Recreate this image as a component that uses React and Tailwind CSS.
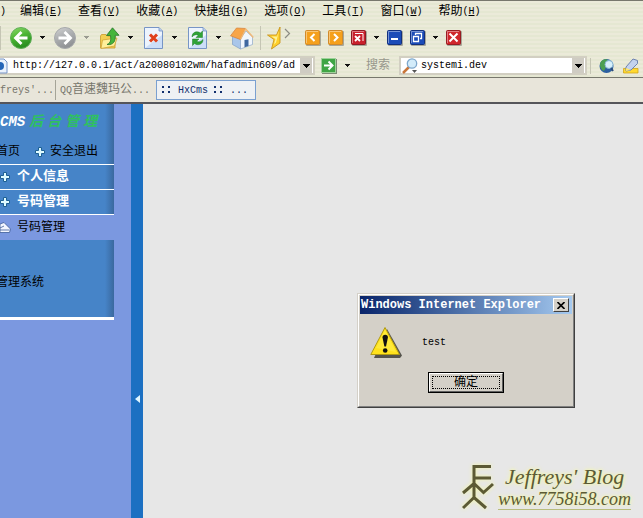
import React, { useState } from "react";

const MENUS = [
  { label: "编辑", hotkey: "E" },
  { label: "查看", hotkey: "V" },
  { label: "收藏", hotkey: "A" },
  { label: "快捷组", hotkey: "G" },
  { label: "选项", hotkey: "O" },
  { label: "工具", hotkey: "T" },
  { label: "窗口", hotkey: "W" },
  { label: "帮助", hotkey: "H" },
];

const DownArrow = ({ color = "#111", label }) => (
  <button aria-label={label} className="w-[6px] shrink-0">
    <svg viewBox="0 0 6 4" className="block h-1 w-[6px]" shapeRendering="crispEdges">
      <path d="M0 0h5v1H0zM1 1h3v1H1zM2 2h1v1H2z" fill={color} />
    </svg>
  </button>
);

const BackIcon = () => (
  <svg viewBox="0 0 22 22" className="block size-[22px]">
    <defs>
      <linearGradient id="back" x1="0" y1="0" x2="0.4" y2="1">
        <stop offset="0" stopColor="#8fdc6c" />
        <stop offset="0.5" stopColor="#4cb534" />
        <stop offset="1" stopColor="#2b8f20" />
      </linearGradient>
    </defs>
    <circle cx="11" cy="11" r="10.5" fill="url(#back)" stroke="#5fae57" />
    <path d="M17.500 11H6M11.500 5L5.500 11l6 6" fill="none" stroke="#fff" strokeWidth="2.800" />
  </svg>
);

const ForwardIcon = () => (
  <svg viewBox="0 0 22 22" className="block size-[22px]">
    <defs>
      <linearGradient id="fwd" x1="0" y1="0" x2="0.4" y2="1">
        <stop offset="0" stopColor="#d2d3d4" />
        <stop offset="0.5" stopColor="#adafb1" />
        <stop offset="1" stopColor="#909295" />
      </linearGradient>
    </defs>
    <circle cx="11" cy="11" r="10.5" fill="url(#fwd)" stroke="#a6a8ab" />
    <path d="M4.500 11H16M10.500 5l6 6-6 6" fill="none" stroke="#fff" strokeWidth="2.800" />
  </svg>
);

const FolderIcon = () => (
  <svg viewBox="0 0 22 22" className="block size-[22px]">
    <path d="M2.500 9l1-1.500h4.500l1.500 1.500H17v12H2.500z" fill="#f3cf52" stroke="#c99a2c" strokeWidth="0.8" />
    <path d="M4.500 13l14.500-2-2.500 8L3 21.500z" fill="#ffef9a" stroke="#d0a336" strokeWidth="0.8" />
    <path d="M9 17.500c4-1.500 4-5 3.500-9H8.500L14.500 .8l6.500 7.500h-3.800c.5 6-1.700 10-8.200 9.200z" fill="#45b53a" stroke="#24752a" strokeWidth="0.8" />
  </svg>
);

const PageIcon = ({ children }) => (
  <svg viewBox="0 0 22 22" className="block size-[22px]">
    <path d="M2.500 .5H17l3.500 3.500v17.500h-18z" fill="#edf4fd" stroke="#7795c6" />
    <path d="M17 .5V4h3.500" fill="#b9cdec" stroke="#7795c6" strokeWidth="0.8" />
    <path d="M3 21h17V8z" fill="#c3d8f6" opacity="0.8" />
    {children}
  </svg>
);

const HomeIcon = () => (
  <svg viewBox="0 0 24 24" className="block size-6">
    <path d="M2.500 10l8 2.500V23l-8-4.500z" fill="#a9c6ea" stroke="#7f9dc6" strokeWidth="0.7" />
    <path d="M10.500 23V12.500L16 5l6.500 6v7.500z" fill="#f1f6fd" stroke="#8ea8c9" strokeWidth="0.7" />
    <path d="M.5 9.800L6.500 2l9 .5-5.200 11z" fill="#f7a548" stroke="#d5803a" strokeWidth="0.7" />
    <path d="M10.600 13.200L15.700 3l7.600 8.500" fill="none" stroke="#f0b878" strokeWidth="1.400" />
    <path d="M14.500 14l4-.8v6.800l-4 1.300z" fill="#3f679f" />
  </svg>
);

const StarIcon = () => (
  <svg viewBox="0 0 24 24" className="block size-6">
    <path d="M13 1l-3.500 8H.5l6.500 4.500L4.500 23l8.500-6z" fill="#ffd02a" stroke="#c99620" strokeWidth="0.9" />
    <path d="M12 5l-2 5.500H4.500L8.500 13l-1.500 5.500 2-2z" fill="#fff29a" />
    <path d="M18 3l4.500 4.500L18 12" fill="none" stroke="#8c8c84" strokeWidth="1.200" />
  </svg>
);

const SquareButton = ({ label, fill, edge, children }) => (
  <button aria-label={label} className="size-4 shrink-0">
    <svg viewBox="0 0 16 16" className="block size-4">
      <rect x="1" y="1" width="15" height="15" rx="1" fill="#8b8b80" opacity="0.7" />
      <rect x="0.5" y="0.5" width="14" height="14" rx="1" fill={fill} stroke={edge} />
      <path d="M1.500 13V1.500H13" fill="none" stroke="#fff" opacity="0.4" />
      {children}
    </svg>
  </button>
);

const PlusIcon = () => (
  <svg viewBox="0 0 10 10" className="block size-[10px] shrink-0">
    <path d="M3.500 .5h3v3h3v3h-3v3h-3v-3h-3v-3h3z" fill="#dffbff" stroke="#1c5f94" />
  </svg>
);

const MenuBar = () => (
  <nav className="flex h-[21px] items-center gap-4 whitespace-nowrap">
    <span className="w-1 text-[10px]">)</span>
    {MENUS.map((menu) => (
      <button key={menu.hotkey} className="flex items-center">
        <span className="text-xs">{menu.label}</span>
        <span className="text-[10px]">
          (<span className="underline">{menu.hotkey}</span>)
        </span>
      </button>
    ))}
  </nav>
);

const ToolBar = () => (
  <div className="flex h-8 items-center">
    <div className="flex items-center gap-2 border-l border-[#c5c5b4] pl-[9px]">
      <button aria-label="后退"><BackIcon /></button>
      <DownArrow label="后退列表" />
      <button aria-label="前进"><ForwardIcon /></button>
      <DownArrow label="前进列表" color="#9a9a90" />
      <button aria-label="打开"><FolderIcon /></button>
      <DownArrow label="打开列表" />
      <button aria-label="停止">
        <PageIcon>
          <path d="M8 7.500l7 7M15 7.500l-7 7" stroke="#e0401c" strokeWidth="3" />
        </PageIcon>
      </button>
      <DownArrow label="停止列表" />
      <button aria-label="刷新">
        <PageIcon>
          <path d="M6 10c0-5 5-6.500 8.500-4L16.500 4v6.500H10l2.300-2.300C10 7 8 7.800 6 10z" fill="#2fa336" stroke="#1d7a2a" strokeWidth="0.5" />
          <path d="M17 12.500c0 5-5 6.500-8.500 4L6.500 18.500V12H13l-2.300 2.300c2.300 1.200 4.300.4 6.300-1.800z" fill="#2fa336" stroke="#1d7a2a" strokeWidth="0.5" />
        </PageIcon>
      </button>
      <DownArrow label="刷新列表" />
      <button aria-label="主页"><HomeIcon /></button>
    </div>
    <button aria-label="收藏夹" className="ml-[6px] border-l border-[#c5c5b4] pl-[6px]"><StarIcon /></button>

    {/* page / window buttons */}
    <div className="ml-[14px] flex items-center gap-[7px]">
      <SquareButton label="上一页" fill="#f5a01c" edge="#d08a2c">
        <path d="M9.500 4L6 7.500 9.500 11" fill="none" stroke="#fff" strokeWidth="2" />
      </SquareButton>
      <SquareButton label="下一页" fill="#f5a01c" edge="#d08a2c">
        <path d="M6 4l3.500 3.500L6 11" fill="none" stroke="#fff" strokeWidth="2" />
      </SquareButton>
      <SquareButton label="关闭页面" fill="#c9202c" edge="#8e1a22">
        <path d="M4 6l5 5M9 6l-5 5" stroke="#fff" strokeWidth="1.800" />
        <path d="M4 3.500h8V11" fill="none" stroke="#fff" />
      </SquareButton>
      <DownArrow label="关闭列表" />
      <SquareButton label="最小化" fill="#1c4cb8" edge="#12307e">
        <path d="M4 9h7" stroke="#fff" strokeWidth="2" />
      </SquareButton>
      <SquareButton label="还原" fill="#1c4cb8" edge="#12307e">
        <path d="M5.500 5V3.500h6v5H10M3.500 6.500h5v5h-5z" fill="none" stroke="#fff" strokeWidth="1.300" />
      </SquareButton>
      <DownArrow label="窗口列表" />
      <SquareButton label="关闭" fill="#d0262c" edge="#981c22">
        <path d="M3.500 3.500l8 8M11.500 3.500l-8 8" stroke="#fff" strokeWidth="2" />
      </SquareButton>
    </div>
  </div>
);

const DropButton = ({ label }) => (
  <button aria-label={label} className="flex h-[15px] w-3 shrink-0 items-center justify-center bg-[#cfccc3]">
    <svg viewBox="0 0 7 4" className="h-1 w-[7px]" shapeRendering="crispEdges">
      <path d="M0 0h7v1H0zM1 1h5v1H1zM2 2h3v1H2zM3 3h1v1H3z" fill="#000" />
    </svg>
  </button>
);

const AddressBar = () => {
  const [url, setUrl] = useState("http://127.0.0.1/act/a20080102wm/hafadmin609/ad");
  const [query, setQuery] = useState("systemi.dev");

  return (
    <div className="flex h-6 items-center border-b border-[#77776c] whitespace-nowrap">
      <div className="flex h-[19px] w-[315px] shrink-0 items-center border-y-2 border-r-2 border-[#d2cfc2] bg-white pr-px">
        <svg viewBox="0 0 8 16" className="h-4 w-2 shrink-0">
          <path d="M0 1h4l3 3v11H0" fill="#eaf2fc" stroke="#7795c6" />
          <path d="M0 4a4 4 0 0 1 0 8z" fill="#2566b8" />
        </svg>
        <input
          aria-label="地址"
          value={url}
          onChange={(e) => setUrl(e.target.value)}
          className="ml-[5px] min-w-0 flex-1 bg-transparent text-[10px] outline-none"
        />
        <DropButton label="地址列表" />
      </div>
      <button aria-label="转到" className="ml-[6px]">
        <svg viewBox="0 0 16 16" className="block size-4">
          <rect x="1" y="1" width="15" height="15" fill="#7c8c74" />
          <rect x="0.5" y="0.5" width="14" height="14" fill="#3fa544" stroke="#9fd19a" />
          <path d="M3 7.500h8M7.500 3.500l4 4-4 4" fill="none" stroke="#fff" strokeWidth="2" />
        </svg>
      </button>
      <span className="ml-2 flex"><DownArrow label="转到列表" /></span>
      <label htmlFor="search" className="ml-[15px] text-xs text-[#97978c]">搜索</label>
      <div className="ml-[9px] flex h-[19px] min-w-0 flex-1 items-center border-2 border-[#d2cfc2] bg-white pr-px">
        <svg viewBox="0 0 18 16" className="h-4 w-[18px] shrink-0">
          <path d="M2 15l6-6" stroke="#c9773a" strokeWidth="2.500" />
          <circle cx="11" cy="5.500" r="4.700" fill="#d3ecfa" stroke="#7fa8cc" strokeWidth="1.300" />
          <path d="M11 12h5l-2.500 3z" fill="#555" />
        </svg>
        <input
          id="search"
          value={query}
          onChange={(e) => setQuery(e.target.value)}
          className="ml-[2px] min-w-0 flex-1 bg-transparent text-[10px] outline-none"
        />
        <DropButton label="搜索引擎" />
      </div>
      <button aria-label="浏览" className="ml-[3px] border-l border-[#c5c5b4] pl-2">
        <svg viewBox="0 0 16 16" className="block size-4">
          <circle cx="7.500" cy="8" r="7" fill="#2c5fa0" />
          <path d="M2 3.500c3-3 6-2.500 7-1L6 6l1 3-2 4C1 11 0 7 2 3.500z" fill="#4ba052" />
          <circle cx="10" cy="6.500" r="4" fill="#d7f0fb" stroke="#86b5d4" />
          <path d="M12 10l2 3" stroke="#2c4c7c" strokeWidth="2" />
        </svg>
      </button>
      <button aria-label="高亮" className="ml-2">
        <svg viewBox="0 0 16 16" className="block size-4">
          <path d="M.5 10.500h14.500V15H.5z" fill="#ffd92e" stroke="#d0a51c" strokeWidth="0.8" />
          <path d="M3 9l7-8 4.500 1.500v3L8 12l-5 1z" fill="#c3d2ee" stroke="#6d82b0" />
          <path d="M3 10l5 2-5 1z" fill="#ffe76a" />
        </svg>
      </button>
      <span className="w-1" />
    </div>
  );
};

const Dots = () => (
  <svg viewBox="0 0 10 8" className="h-2 w-[10px]" shapeRendering="crispEdges">
    <path d="M0 0h2v2H0zM6 0h2v2H6zM0 5h2v2H0zM6 5h2v2H6z" fill="#12306e" />
  </svg>
);

const TabBar = () => (
  <div className="flex h-[26px] items-center border-b-2 border-[#55555a] bg-[#e8e5da] text-[10px] whitespace-nowrap text-[#77766c]">
    <button className="flex h-5 w-[55px] items-center">freys'...</button>
    <button className="flex h-5 w-[100px] items-center border-l border-[#a5a498] pl-1">
      <span>QQ</span>
      <span className="text-xs">音速魏玛公</span>
      <span>...</span>
    </button>
    <button className="ml-px flex h-5 w-[100px] items-center gap-[6px] border border-[#7aa0d0] bg-[#eef1f4] pl-[5px] text-[#12306e]">
      <Dots />
      <span>HxCms</span>
      <Dots />
      <span>...</span>
    </button>
  </div>
);

const SideHeading = ({ children }) => (
  <a href="#menu" className="flex h-[25px] items-center gap-[7px] border-b border-white text-[13px] font-bold text-white">
    <PlusIcon />
    {children}
  </a>
);

const PANEL = "bg-[linear-gradient(to_left,#3a699f,#4684c8_9px)]";

const Sidebar = () => (
  <aside className="w-[131px] shrink-0 overflow-hidden bg-[#7b98e0] pr-[17px] whitespace-nowrap">
    <div className={PANEL}>
      <div className="flex h-9 items-center gap-1 text-sm font-bold italic">
        <span className="text-white">CMS</span>
        <span className="flex gap-1 text-[#2fc060]">
          {["后", "台", "管", "理"].map((char) => (
            <span key={char}>{char}</span>
          ))}
        </span>
      </div>
      <div className="flex h-[25px] items-center border-b border-white text-xs text-black">
        <a href="#home" className="-ml-1">首页</a>
        <a href="#exit" className="ml-[15px] flex items-center gap-[5px]">
          <PlusIcon />
          安全退出
        </a>
      </div>
      <SideHeading>个人信息</SideHeading>
      <SideHeading>号码管理</SideHeading>
    </div>
    <a href="#numbers" className="flex h-[25px] items-center gap-[6px] text-xs text-black">
      <svg viewBox="0 0 11 12" className="h-3 w-[11px]">
        <path d="M0 2l4-1.500 6.500 6.500-1 3.500H0z" fill="#f4f7ff" stroke="#3c5c98" strokeWidth="0.8" />
        <path d="M0 6l4-2M0 8h9.500" fill="none" stroke="#3c5c98" strokeWidth="0.8" />
      </svg>
      号码管理
    </a>
    <div className={`${PANEL} flex h-20 items-center border-b-[3px] border-white text-xs text-black`}>
      <span className="-ml-1 pt-2">管理系统</span>
    </div>
  </aside>
);

const AlertDialog = ({ onClose }) => (
  <div
    role="alertdialog"
    aria-label="Windows Internet Explorer"
    className="absolute top-[189px] left-[214px] w-[218px] border border-t-[#d4d0c8] border-r-[#404040] border-b-[#404040] border-l-[#d4d0c8] bg-[#d4d0c8] text-black"
  >
    <div className="border border-t-white border-r-[#808080] border-b-[#808080] border-l-white p-px">
      <div className="flex h-[18px] items-center justify-between bg-linear-to-r from-[#0a246a] to-[#a6caf0] pr-[3px] pl-px">
        <span className="text-xs font-bold text-white">Windows Internet Explorer</span>
        <button
          aria-label="关闭"
          onClick={onClose}
          className="flex h-[14px] w-4 items-center justify-center border border-t-white border-r-[#404040] border-b-[#404040] border-l-white bg-[#d4d0c8]"
        >
          <svg viewBox="0 0 8 7" className="h-[7px] w-2">
            <path d="M.5 0l7 7M7.500 0l-7 7" stroke="#000" strokeWidth="1.600" />
          </svg>
        </button>
      </div>
      <div className="flex items-center gap-5 px-[10px] pt-3">
        <svg viewBox="0 0 32 32" className="size-8">
          <path d="M17 3L32 29.500 30 32H4z" fill="#55534c" />
          <path d="M15 1.500L29.500 28.500H.8z" fill="#ffe11c" stroke="#b09a14" strokeLinejoin="round" />
          <path d="M15 4L6 22 26 26z" fill="#fff04c" opacity="0.6" />
          <path d="M12.500 11.500a2.700 2.700 0 0 1 5.400 0L16 20.500h-1.600z" fill="#111" />
          <circle cx="15.200" cy="24.500" r="2.300" fill="#111" />
        </svg>
        <p className="text-[10px]">test</p>
      </div>
      <div className="flex justify-center pt-[14px] pb-3">
        <button onClick={onClose} className="h-[21px] w-[76px] border border-black text-xs">
          <span className="flex h-full items-center justify-center border border-t-white border-r-[#606060] border-b-[#606060] border-l-white p-[2px]">
            <span className="flex h-full flex-1 items-center justify-center border border-dotted border-black">确定</span>
          </span>
        </button>
      </div>
    </div>
  </div>
);

const Watermark = () => (
  <div className="absolute right-3 bottom-2 flex items-center gap-1 text-[#5c5a34] italic [font-family:'Liberation_Serif',serif] [text-shadow:0_0_3px_#f4f8a0,0_0_5px_#f4f8a0]">
    <svg viewBox="0 0 32 46" className="h-[46px] w-8 drop-shadow-[0_0_2px_#f4f8a0]">
      <path d="M12 34V2.500h17M12 14h17M1 29l11-9.500 9.500 9L31 20M1 44l11-10.500L24 44" fill="none" stroke="#5c5a34" strokeWidth="3" />
    </svg>
    <div>
      <p className="text-center text-[22px] leading-6">Jeffreys' Blog</p>
      <a href="#blog" className="block border-b border-[#b9bd7c] text-lg leading-5">www.7758i58.com</a>
    </div>
  </div>
);

const App = () => {
  const [alertOpen, setAlertOpen] = useState(true);

  return (
    <div className="flex min-h-screen flex-col overflow-hidden bg-[#e7e7e7] text-black [font-family:'Liberation_Mono','Noto_Sans_CJK_SC',monospace]">
      <header>
        <div className="border-t border-[#77776c] bg-[repeating-linear-gradient(to_bottom,#ebead9_0_2px,#e5e7d2_2px_4px)]">
          <MenuBar />
          <ToolBar />
          <AddressBar />
        </div>
        <TabBar />
      </header>

      <div className="flex flex-1">
        <Sidebar />
        <button aria-label="收起侧栏" className="flex w-3 shrink-0 items-center justify-center bg-[#1c70c2]">
          <svg viewBox="0 0 5 8" className="mt-44 h-2 w-[5px]">
            <path d="M5 0v8L0 4z" fill="#dff6ff" />
          </svg>
        </button>
        <main className="relative flex-1">
          {alertOpen && <AlertDialog onClose={() => setAlertOpen(false)} />}
          <Watermark />
        </main>
      </div>
    </div>
  );
};

export default App;
